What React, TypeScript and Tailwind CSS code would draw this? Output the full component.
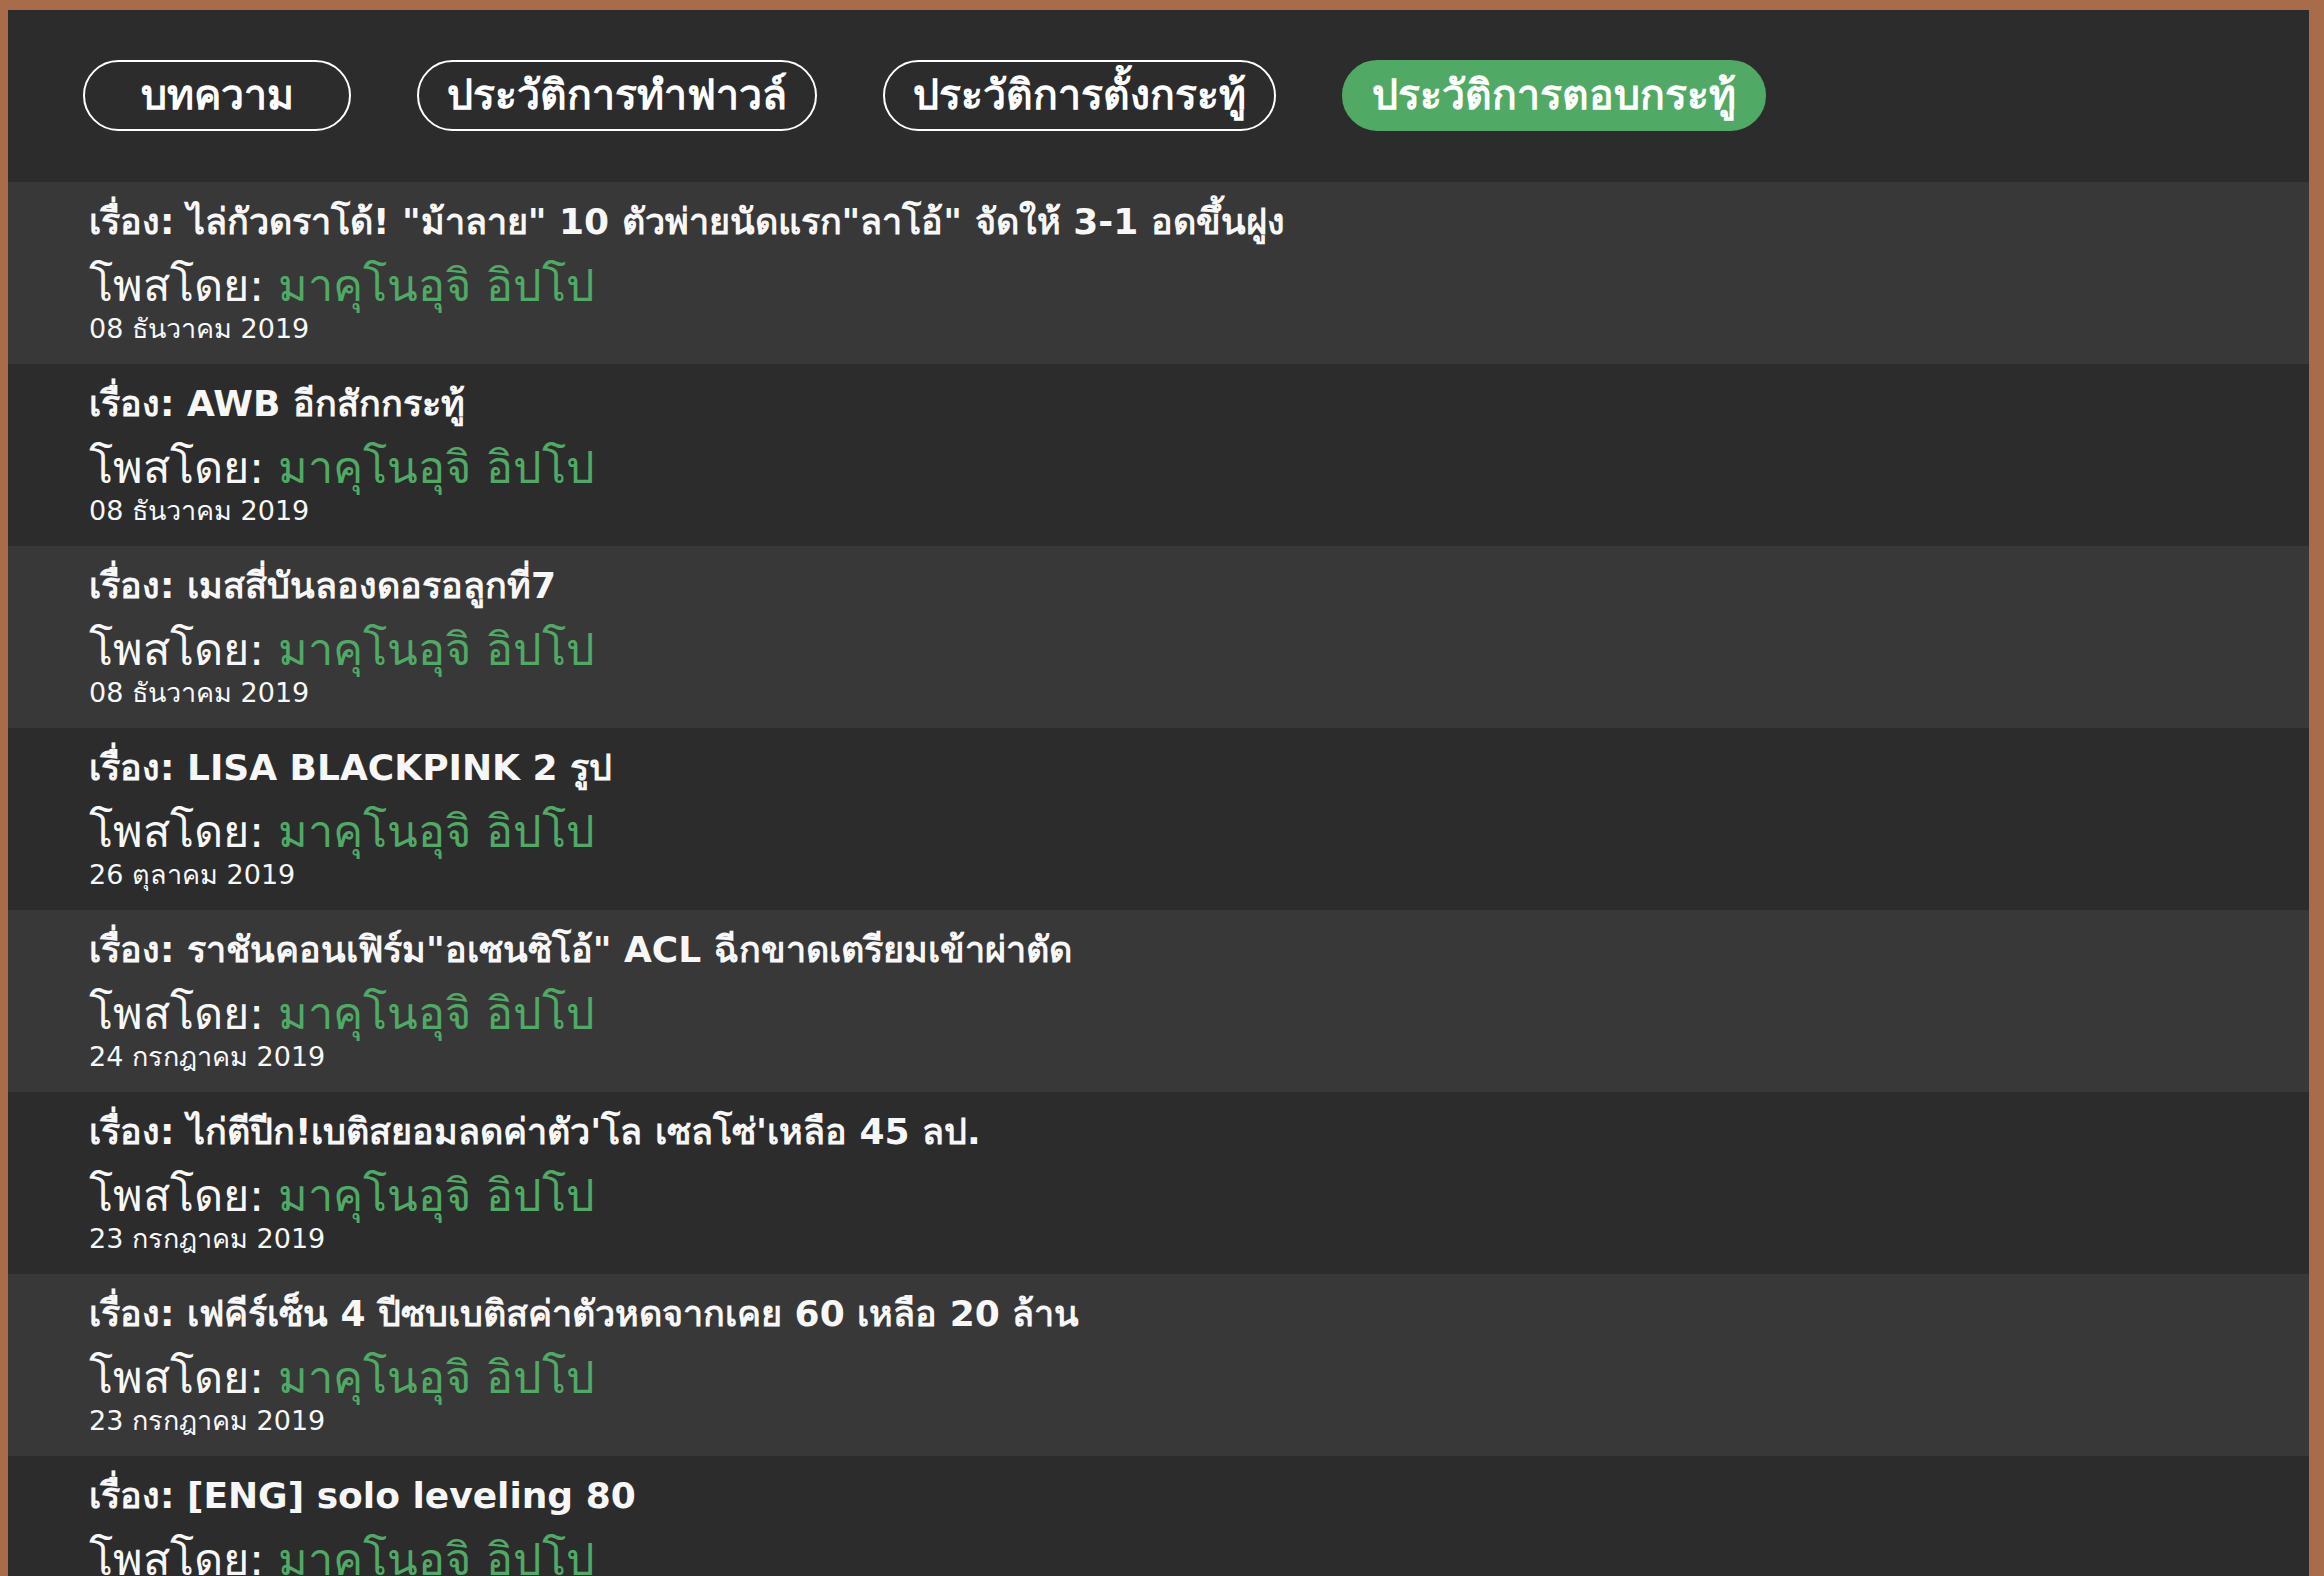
import React from "react";

const tabs = [
  { label: "บทความ", active: false, first: true },
  { label: "ประวัติการทำฟาวล์", active: false },
  { label: "ประวัติการตั้งกระทู้", active: false },
  { label: "ประวัติการตอบกระทู้", active: true },
];

const posts = [
  { title: 'ไล่กัวดราโด้! "ม้าลาย" 10 ตัวพ่ายนัดแรก"ลาโอ้" จัดให้ 3-1 อดขึ้นฝูง', date: "08 ธันวาคม 2019" },
  { title: "AWB อีกสักกระทู้", date: "08 ธันวาคม 2019" },
  { title: "เมสสี่บันลองดอรอลูกที่7", date: "08 ธันวาคม 2019" },
  { title: "LISA BLACKPINK 2 รูป", date: "26 ตุลาคม 2019" },
  { title: 'ราชันคอนเฟิร์ม"อเซนซิโอ้" ACL ฉีกขาดเตรียมเข้าผ่าตัด', date: "24 กรกฎาคม 2019" },
  { title: "ไก่ตีปีก!เบติสยอมลดค่าตัว'โล เซลโซ่'เหลือ 45 ลป.", date: "23 กรกฎาคม 2019" },
  { title: "เฟคีร์เซ็น 4 ปีซบเบติสค่าตัวหดจากเคย 60 เหลือ 20 ล้าน", date: "23 กรกฎาคม 2019" },
  { title: "[ENG] solo leveling 80", date: "22 กรกฎาคม 2019" },
];

export default function App() {
  return (
    <div
      className="h-[1576px] w-full overflow-hidden bg-[#a86c4a] pt-[10px] pl-[8px] pr-[15px]"
      style={{ fontFamily: "Tahoma, 'DejaVu Sans', 'Noto Sans', sans-serif" }}
    >
      <div className="h-full bg-[#2c2c2c]">
        <div className="flex items-center gap-[66px] pl-[75px] pt-[50px] pb-[51px]">
          {tabs.map((t) => (
            <div
              key={t.label}
              className={
                t.active
                  ? "flex h-[71px] items-center justify-center rounded-full border-2 border-[#50aa66] bg-[#50aa66] px-[28px] text-[41px] font-bold text-white"
                  : t.first
                  ? "flex h-[71px] w-[268px] items-center justify-center rounded-full border-2 border-white px-[28px] text-[41px] font-bold text-white"
                  : "flex h-[71px] items-center justify-center rounded-full border-2 border-white px-[28px] text-[41px] font-bold text-white"
              }
            >
              {t.label}
            </div>
          ))}
        </div>
        <div className="flex flex-col">
          {posts.map((p, i) => (
            <div
              key={i}
              className={
                i % 2 === 0
                  ? "flex h-[182px] flex-col bg-[#383838] pl-[81px] pt-[17px] text-[#f7f7f7]"
                  : "flex h-[182px] flex-col bg-[#2c2c2c] pl-[81px] pt-[17px] text-[#f7f7f7]"
              }
            >
              <div className="whitespace-nowrap text-[36px] font-bold leading-[46px]">เรื่อง: {p.title}</div>
              <div className="mt-[13px] whitespace-nowrap text-[45px] font-medium leading-[56px]">
                โพสโดย: <span className="text-[#50aa66]">มาคุโนอุจิ อิปโป</span>
              </div>
              <div className="whitespace-nowrap text-[27px] leading-[30px]">{p.date}</div>
            </div>
          ))}
        </div>
      </div>
    </div>
  );
}
